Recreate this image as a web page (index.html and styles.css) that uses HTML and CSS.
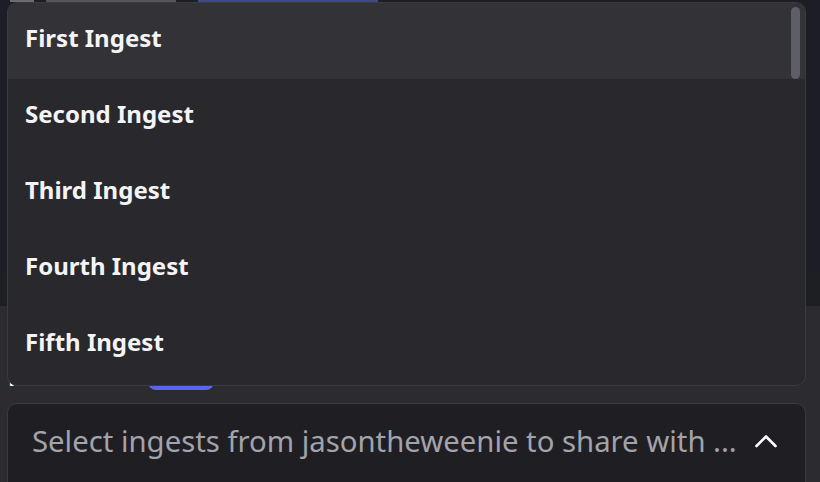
FILE: index.html
```html
<!DOCTYPE html>
<html lang="en">
<head>
<meta charset="utf-8">
<title>Ingest select</title>
<link rel="stylesheet" href="styles.css">
</head>
<body>
<div class="page">
  <div class="backdrop-top">
    <div class="top-strip">
      <span class="strip-avatar"></span>
      <span class="strip-text"></span>
      <span class="strip-link"></span>
    </div>
  </div>
  <div class="backdrop-band"></div>
  <div class="content">
    <div class="label-row">
      <span class="label">NEXT USE:</span>
      <span class="badge">NEW</span>
      <span class="muted">15.6</span>
    </div>
    <div class="select">
      <span class="placeholder">Select ingests from jasontheweenie to share with ...</span>
      <svg class="chevron" width="24" height="14" viewBox="0 0 24 14" aria-hidden="true">
        <path d="M2.5 12 L12 2.5 L21.5 12" fill="none" stroke="#ffffff" stroke-width="2.6" stroke-linecap="round" stroke-linejoin="round"/>
      </svg>
    </div>
  </div>
  <div class="menu">
    <div class="options">
      <div class="option active">First Ingest</div>
      <div class="option">Second Ingest</div>
      <div class="option">Third Ingest</div>
      <div class="option">Fourth Ingest</div>
      <div class="option">Fifth Ingest</div>
    </div>
    <div class="scrollbar"><div class="thumb"></div></div>
  </div>
</div>
</body>
</html>
```

FILE: styles.css
```css
* { box-sizing: border-box; }
html, body { margin: 0; padding: 0; }
body {
  width: 820px;
  height: 482px;
  overflow: hidden;
  background: #2b2b30;
  font-family: "Noto Sans", "Open Sans", sans-serif;
  color: #ffffff;
}
.page {
  position: relative;
  width: 820px;
  height: 482px;
  display: flex;
  flex-direction: column;
  overflow: hidden;
}
.backdrop-top {
  height: 272px;
  flex: none;
  background: #1c1d27;
}
.top-strip {
  display: flex;
  align-items: flex-start;
  height: 3px;
  gap: 12px;
  padding-left: 10px;
}
.strip-avatar { width: 24px; height: 2px; background: #6b6b70; }
.strip-text { width: 130px; height: 2px; background: #55565c; }
.strip-link { width: 180px; height: 2px; background: #3b4a8f; margin-left: 10px; }
.backdrop-band {
  height: 34px;
  flex: none;
  background: #1e1f23;
}
.content {
  flex: none;
  display: flex;
  flex-direction: column;
  padding: 0 14px 0 7px;
  background: #2b2b30;
}
.label-row {
  display: flex;
  align-items: flex-end;
  gap: 14px;
  height: 26px;
  margin-top: 58px;
  padding-left: 1px;
  line-height: 26px;
  font-size: 24px;
}
.label { font-weight: 800; color: #ffffff; letter-spacing: 0.5px; }
.badge {
  background: #5865f2;
  color: #ffffff;
  border-radius: 8px;
  padding: 0 14px;
  font-size: 16px;
  line-height: 26px;
  font-weight: 700;
}
.muted { color: #8e8f96; font-size: 19px; margin-left: 4px; }
.select {
  margin-top: 13px;
  height: 90px;
  flex: none;
  border: 1.5px solid #3a3a41;
  border-radius: 10px;
  background: #1f1f23;
  display: flex;
  align-items: flex-start;
  padding: 17px 27px 0 24px;
  justify-content: space-between;
}
.placeholder {
  font-size: 29.3px;
  line-height: 40px;
  color: #a2a3ab;
  white-space: nowrap;
}
.chevron { margin-top: 13px; }
.menu {
  position: absolute;
  top: 2px;
  left: 7px;
  width: 799px;
  height: 384px;
  background: #28282d;
  border: 1.5px solid #3a3a41;
  border-radius: 10px;
  overflow: hidden;
  display: flex;
}
.options {
  flex: 1;
  display: flex;
  flex-direction: column;
}
.option {
  height: 76px;
  flex: none;
  display: flex;
  align-items: center;
  padding-left: 17px;
  padding-bottom: 8px;
  font-size: 24px;
  font-weight: 700;
  color: #f4f4f6;
}
.option.active { background: #323237; }
.scrollbar {
  position: absolute;
  top: 4px;
  right: 5px;
  width: 9px;
  height: 76px;
}
.thumb {
  width: 9px;
  height: 72px;
  border-radius: 5px;
  background: #5e5e68;
}
```
